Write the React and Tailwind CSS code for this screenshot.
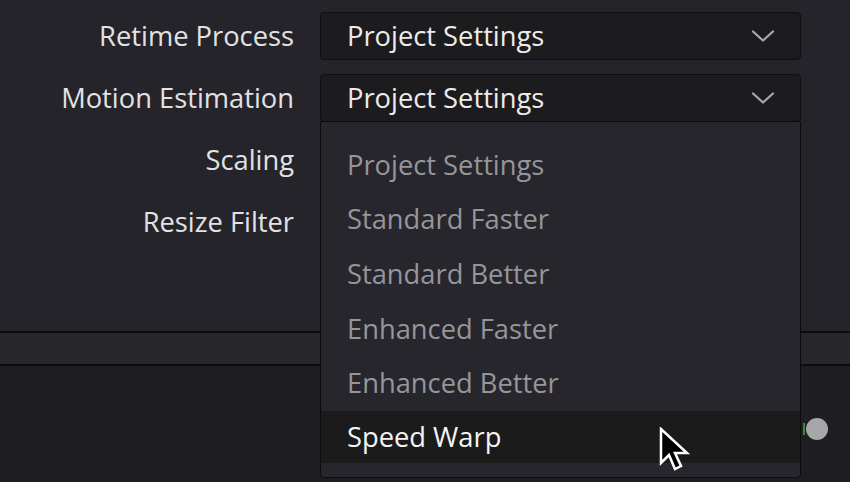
import React from "react";

function Chevron() {
  return (
    <svg width="24" height="14" viewBox="0 0 24 14" fill="none">
      <path d="M2 2.5 L12 11.5 L22 2.5" stroke="#a9a8ad" strokeWidth="2.3" strokeLinecap="round" strokeLinejoin="round" />
    </svg>
  );
}

function Select({ value }) {
  return (
    <div className="flex h-[48px] w-[481px] items-center justify-between rounded-[4px] border border-[#0f0f11] bg-[#1c1b1e] pl-[26px] pr-[25px]">
      <span className="text-[27.3px] font-medium text-[#ececec]">{value}</span>
      <Chevron />
    </div>
  );
}

const items = [
  "Project Settings",
  "Standard Faster",
  "Standard Better",
  "Enhanced Faster",
  "Enhanced Better",
];

export default function App() {
  return (
    <div
      className="relative h-[482px] w-[850px] overflow-hidden bg-[#1e1d22]"
      style={{ fontFamily: '"Open Sans", "Noto Sans", sans-serif' }}
    >
      <div className="flex h-[331px] flex-col bg-[#25242a] pt-[12px]">
        <div className="flex items-center gap-[26px]">
          <div className="w-[294px] text-right text-[27.3px] font-medium text-[#e2e2e4]">Retime Process</div>
          <Select value="Project Settings" />
        </div>
        <div className="mt-[14px] flex items-center gap-[26px]">
          <div className="w-[294px] text-right text-[27.3px] font-medium text-[#e2e2e4]">Motion Estimation</div>
          <Select value="Project Settings" />
        </div>
        <div className="mt-[14px] flex h-[48px] items-center">
          <div className="w-[294px] text-right text-[27.3px] font-medium text-[#e2e2e4]">Scaling</div>
        </div>
        <div className="mt-[14px] flex h-[48px] items-center">
          <div className="w-[294px] text-right text-[27.3px] font-medium text-[#e2e2e4]">Resize Filter</div>
        </div>
      </div>
      <div className="h-[2px] bg-[#0c0c0e]" />
      <div className="h-[31px] bg-[#27262b]" />
      <div className="h-[2px] bg-[#0c0c0e]" />

      {/* dropdown menu */}
      <div className="absolute left-[320px] top-[121px] flex h-[357px] w-[481px] flex-col rounded-b-[4px] border border-[#0c0c0e] bg-[#27262c] pt-[16px]">
        {items.map((t) => (
          <div key={t} className="flex h-[54.6px] items-center pl-[26px] text-[27.3px] font-medium text-[#96959a]">
            {t}
          </div>
        ))}
        <div className="flex h-[52px] items-center bg-[#1c1b1c] pl-[26px] text-[27.3px] font-medium text-[#f4f4f4]">
          Speed Warp
        </div>
      </div>

      {/* right side knob */}
      <div className="absolute left-[803px] top-[423px] h-[12px] w-[2px] bg-[#3f8a3a]" />
      <div className="absolute left-[806px] top-[418px] h-[22px] w-[22px] rounded-full bg-[#a7a7aa]" />

      {/* cursor */}
      <svg className="absolute left-[659px] top-[427px]" width="34" height="46" viewBox="0 0 34 46">
        <path d="M2 2 L2 36 L10 28 L16 42 L22 39 L16 26 L28 26 Z" fill="#000" stroke="#fff" strokeWidth="2.5" strokeLinejoin="miter" />
      </svg>
    </div>
  );
}
